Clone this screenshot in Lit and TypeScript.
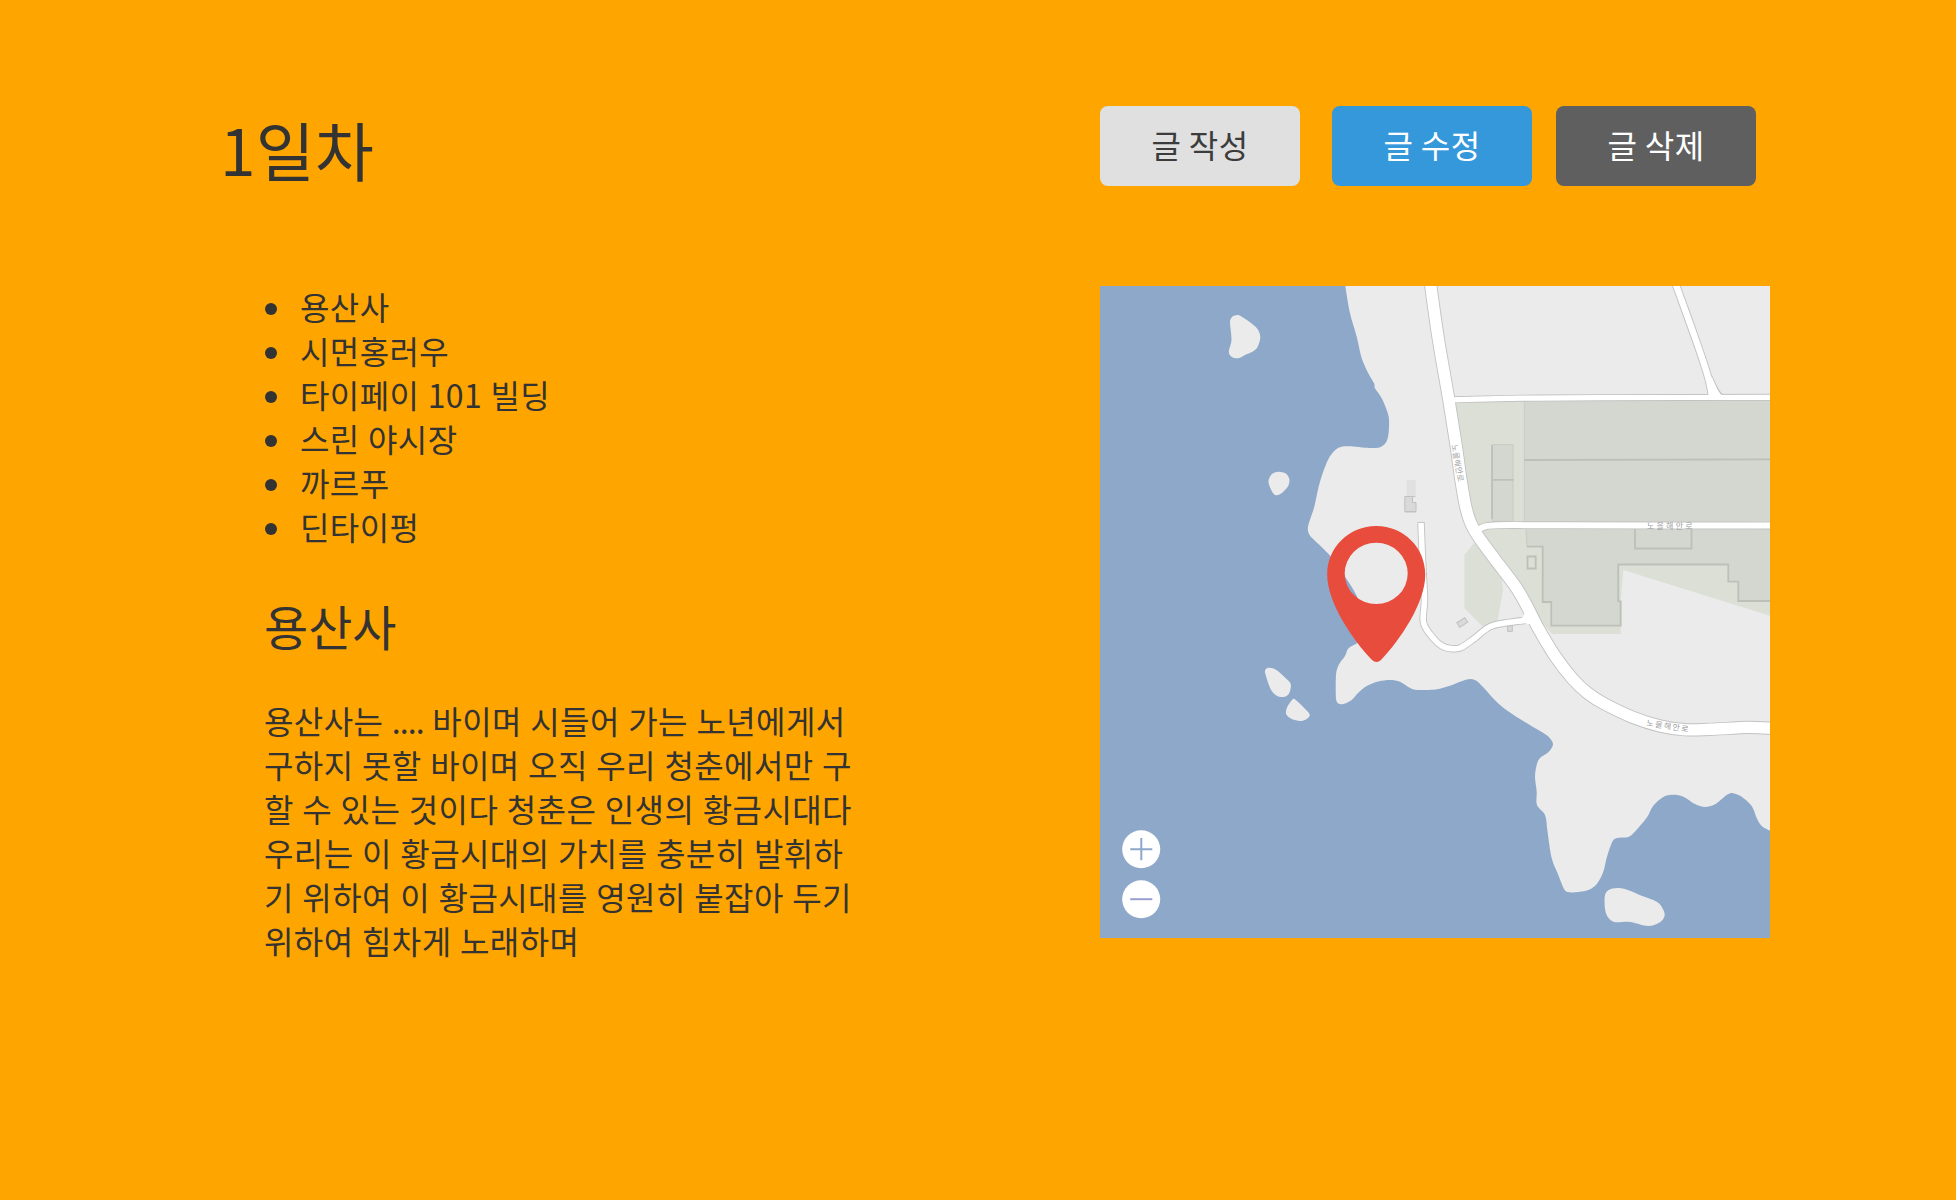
import { LitElement, html, svg, css } from "lit";
import { customElement } from "lit/decorators.js";

type Pt = [number, number];

/** Smooth path through all points (Catmull-Rom converted to cubic Béziers). */
function curve(pts: Pt[], closed = false): string {
  const n = pts.length;
  const at = (i: number): Pt =>
    closed ? pts[(i + n) % n] : pts[Math.max(0, Math.min(n - 1, i))];
  let d = `M${pts[0][0]} ${pts[0][1]}`;
  for (let i = 0; i < (closed ? n : n - 1); i++) {
    const [a, b, c, e] = [at(i - 1), at(i), at(i + 1), at(i + 2)];
    // Tangents are limited by the segment length so that short segments do not loop.
    const len = Math.hypot(c[0] - b[0], c[1] - b[1]);
    const tangent = (p: Pt, q: Pt): Pt => {
      const tx = (q[0] - p[0]) / 6;
      const ty = (q[1] - p[1]) / 6;
      const t = Math.hypot(tx, ty) || 1;
      const k = Math.min(1, (len * 0.36) / t);
      return [tx * k, ty * k];
    };
    const u = tangent(a, c);
    const v = tangent(b, e);
    const f = (x: number) => x.toFixed(1);
    d += `C${f(b[0] + u[0])} ${f(b[1] + u[1])} ${f(c[0] - v[0])} ${f(c[1] - v[1])} ${c[0]} ${c[1]}`;
  }
  return closed ? d + "Z" : d;
}

const coast: Pt[] = [
  [1345.3, 286], [1350, 313.3], [1356.7, 336.7], [1361.7, 358.3], [1368.3, 373.3],
  [1374.3, 383.8], [1374.8, 388], [1381.7, 398.3], [1388.3, 415], [1389, 426.7],
  [1387.7, 438.3], [1384.3, 444.5], [1378.3, 447.7], [1365, 447.7], [1353.3, 446.5],
  [1341.7, 446.7], [1335, 450.3], [1328.3, 459.3], [1322.7, 473.3], [1318.3, 488.3],
  [1314.3, 506.7], [1308, 526.7], [1309.3, 534.5], [1315, 540.7], [1330.3, 556],
  [1345, 576.7], [1356.7, 596], [1364, 618], [1364, 636], [1357.7, 642.7],
  [1348.5, 648.3], [1345, 656], [1338.6, 665], [1336, 675], [1336, 699],
  [1338.3, 703.5], [1343.3, 704], [1351.7, 700], [1358.3, 692.8], [1366.7, 686],
  [1378.3, 681.5], [1390, 680], [1400, 681.7], [1408.3, 687], [1415, 689.7],
  [1426, 690], [1436.7, 689.3], [1450, 685.7], [1466.7, 679.5], [1475, 680],
  [1483.3, 687.3], [1491.7, 696.7], [1503.3, 707.7], [1520, 719], [1540, 731],
  [1548.3, 736.5], [1553, 744.3], [1548.3, 752.3], [1540, 758], [1536.7, 765],
  [1535, 776.7], [1536.7, 791.7], [1537, 805], [1545, 815], [1547.3, 830],
  [1551.7, 858.3], [1558.3, 875], [1564, 889], [1567.5, 892], [1575, 892.3],
  [1588.3, 890], [1596.7, 884], [1603.3, 871.7], [1607, 856.7], [1612.7, 841],
  [1617, 838], [1628.3, 837], [1633.3, 833.3], [1646.7, 817.7], [1653.3, 805.7],
  [1663.3, 797], [1673.3, 794.8], [1683.3, 796.7], [1695, 804], [1705, 807],
  [1715, 804.3], [1726.7, 795], [1732, 793], [1741.7, 796.7], [1751.7, 806],
  [1756.7, 818], [1761.7, 826], [1770, 830.7],
];

const islands: Pt[][] = [
  [[1230, 321.7], [1232.3, 316.8], [1237.7, 315], [1243, 317.5], [1251.7, 323.5], [1257.7, 329.3], [1260.3, 337.3], [1257.7, 346.7], [1253.3, 351.3], [1245, 355], [1238.3, 358.3], [1231.7, 356.8], [1228.8, 351.7], [1231.5, 340]],
  [[1268.5, 482], [1271.7, 474.3], [1278.3, 471.7], [1285.7, 473.5], [1289.3, 479], [1288.3, 485.7], [1282.5, 492.5], [1276.7, 495.3], [1272.7, 492.7]],
  [[1265, 672.5], [1265.8, 669], [1269, 667.7], [1276.7, 670.2], [1285, 677.5], [1290.3, 683], [1290.6, 688.5], [1288.7, 694], [1284, 697], [1276.7, 695.7], [1270.7, 689.3]],
  [[1292, 700], [1293.8, 698.8], [1295.8, 700], [1299.5, 703.3], [1308.5, 712.5], [1309.7, 715], [1308.2, 717.8], [1305, 720], [1300, 721], [1291.7, 719], [1286.4, 714.5], [1286.2, 710], [1288.3, 705]],
  [[1604.7, 896.7], [1608.3, 890.3], [1618.3, 888], [1630, 890.7], [1643, 896.3], [1656.7, 901.7], [1661.5, 906.5], [1664.7, 915], [1660, 922.3], [1648.3, 926], [1630, 922], [1613.3, 921.7], [1606, 913.3]],
];

const roads: { w: number; pts: Pt[] }[] = [
  { w: 5.6, pts: [[1421, 523], [1422.5, 560], [1424.5, 600], [1423.6, 623], [1434, 639], [1442, 646], [1451, 648.6], [1460, 648], [1473.3, 639.3], [1490, 626.7], [1510, 622.3], [1528, 620]] },
  { w: 6.4, pts: [[1675.7, 284], [1692.3, 330], [1702.7, 360], [1708.8, 380], [1712, 396]] },
  { w: 5.2, pts: [[1450, 399.8], [1523, 398.2], [1600, 397.7], [1772, 397.3]] },
  { w: 6, pts: [[1477, 530], [1486, 526.2], [1497, 525.2], [1560, 525.2], [1772, 525.6]] },
  { w: 11.4, pts: [[1430.5, 284], [1438.5, 340], [1448.3, 396.7], [1456.3, 446.7], [1461, 480], [1465.7, 506.7], [1470.5, 522.5], [1478.3, 536.7], [1496.7, 561.7], [1516, 587.3], [1526, 604.5], [1538.3, 628.3], [1555, 656], [1572.7, 679], [1587.5, 693], [1603.3, 703.3], [1632.7, 717.3], [1660, 726], [1685, 729.7], [1710, 729.3], [1748.3, 727.4], [1772, 728.3]] },
];

@customElement("area-map")
export class AreaMap extends LitElement {
  static styles = css`
    :host { display: block; }
    svg { display: block; width: 670px; height: 652px; }
    .sea { fill: #8ea8c9; }
    .land { fill: #ebebeb; }
    .park { fill: #dcdfd6; }
    .block { fill: #d4d7cf; }
    .wall { fill: none; stroke: #bdc0b9; stroke-width: 1.8; }
    .faint { fill: none; stroke: #c8cbc4; stroke-width: 1; }
    .hut { fill: #d9d9d9; stroke: #c0c0c0; stroke-width: 1; }
    .shade { fill: #e0e0e0; }
    .edge { fill: none; stroke: #c2c2c2; }
    .road { fill: none; stroke: #fff; }
    .joint { fill: #fff; }
    .name { fill: #a0a0a0; font: 8px "Noto Sans CJK KR", sans-serif; }
    .pin { fill: #e84c3d; fill-rule: evenodd; }
    .knob { fill: #fff; }
    .sign { stroke: #8ea8c9; stroke-width: 2; }
    .minus { stroke: #9a9fd0; stroke-width: 2; }
  `;

  render() {
    const lines = roads.map((r) => ({ w: r.w, d: curve(r.pts) }));
    return html`<svg viewBox="1100 286 670 652" role="img">
      <rect class="sea" x="1100" y="286" width="670" height="652"></rect>
      <path class="land" d="${curve(coast)}V286Z"></path>
      ${islands.map((i) => svg`<path class="land" d=${curve(i, true)}></path>`)}
      <path class="park" d="M1452 402L1770 400V634H1552L1528 606L1478 532L1462 478Z"></path>
      <path class="park" d="M1474 543L1464.3 555V608L1482 626L1497 624L1503 590L1500 566Z"></path>
      <path class="land" d="M1623.3 570L1770 615.7V640H1620.7V602Z"></path>
      <path class="block" d="M1524.3 400H1770V522H1524.3ZM1526 528L1527 546.7H1542.7L1543.3 601.7H1551.3V625.7H1620.7V601.7H1618V564.3H1728.3V581.7H1738.3V600.8H1770V528Z"></path>
      <path class="faint" d="M1524.3 401V522M1526 529L1527 546.7M1618 601V564.5"></path>
      <path class="wall" d="M1524.3 460L1770 459.3M1527 546.7H1542.7V602H1551.3V625.7H1620.7V601.3H1618.3V564.5H1728.3V581.7H1738.3V601H1770"></path>
      <path class="wall" d="M1635 528V548.5H1691.5V528M1527.5 556.5H1535.7V568.5H1527.5Z"></path>
      <rect class="block" x="1492" y="444.7" width="21.3" height="76.5"></rect>
      <path class="faint" d="M1492 444.7H1513V521.3H1493L1492 519Z"></path>
      <path class="wall" d="M1492 479.8H1513.5M1492 445V519"></path>
      <rect class="shade" x="1406.7" y="480" width="9" height="16"></rect>
      <path class="hut" d="M1404.8 496.5H1412.5V502.5H1416V511.5H1404.8Z"></path>
      <path class="edge" stroke-width="1" d="M1412.5 496.5H1415.5M1404.8 512H1416"></path>
      <rect class="hut" x="1457.5" y="619.7" width="9.5" height="5.5" transform="rotate(-33 1462.3 622.5)"></rect>
      <rect class="hut" x="1507.7" y="625.7" width="4.6" height="5.6"></rect>
      ${lines.map((l) => svg`<path class="edge" stroke-width=${l.w + 1.8} d=${l.d}></path>`)}
      <path class="edge" stroke-width="1" d="M1417.5 522.4H1424.6"></path>
      <path class="edge" stroke-width="1.8" d="M1711.5 376C1715 384 1718 392 1722 394.6"></path>
      ${lines.map((l) => svg`<path class="road" stroke-width=${l.w} d=${l.d}></path>`)}
      <path class="joint" d="M1711.5 376C1715 384 1718 392 1722 395.5H1709.5ZM1518 619.3C1522 618.6 1524 616.5 1524.8 613L1532 622L1528 624.5C1526 623 1523 623 1519 623.8Z"></path>
      <text class="name" transform="translate(1451.5 445) rotate(80)" textLength="38">노을해안로</text>
      <text class="name" x="1647" y="528.5" textLength="46">노을해안로</text>
      <text class="name" transform="translate(1646 725.5) rotate(9)" textLength="43">노을해안로</text>
      <path class="pin" d="M1376.3 526C1349 526 1327.2 547.5 1327.2 574.5C1327.2 603 1353 640 1372 660Q1376.5 664.2 1381 660C1400 640 1425.3 603 1425.3 574.5C1425.3 547.5 1403.5 526 1376.3 526ZM1376.2 542.7A31.5 30.7 0 1 1 1376.2 604.1A31.5 30.7 0 1 1 1376.2 542.7Z"></path>
      <circle class="knob" cx="1141.2" cy="849.2" r="19"></circle>
      <path class="sign" d="M1130.2 849.2H1152.3M1141.3 838V860.3"></path>
      <circle class="knob" cx="1141.2" cy="899.2" r="19"></circle>
      <path class="minus" d="M1130.2 899.2H1152.3"></path>
    </svg>`;
  }
}

const places = ["용산사", "시먼홍러우", "타이페이 101 빌딩", "스린 야시장", "까르푸", "딘타이펑"];

const story = [
  "구하지 못할 바이며 오직 우리 청춘에서만 구",
  "할 수 있는 것이다 청춘은 인생의 황금시대다",
  "우리는 이 황금시대의 가치를 충분히 발휘하",
  "기 위하여 이 황금시대를 영원히 붙잡아 두기",
  "위하여 힘차게 노래하며",
];

@customElement("app-root")
export class AppRoot extends LitElement {
  static styles = css`
    :host {
      display: block;
      box-sizing: border-box;
      height: 1200px;
      background: #ffa500;
      color: #333;
      font: 32px/44px "Noto Sans CJK KR", sans-serif;
      letter-spacing: 0.4px;
      overflow: hidden;
    }
    .page {
      display: grid;
      grid-template-columns: 880px 670px;
      grid-template-rows: 180px auto;
      justify-content: start;
      padding: 106px 0 0 220px;
    }
    .title { margin: -4px 0 0; font-size: 64px; line-height: 92px; font-weight: 400; letter-spacing: 0.3px; }
    .actions { display: flex; height: 80px; }
    .btn {
      width: 200px;
      height: 80px;
      padding: 0 0 4px;
      border: 0;
      border-radius: 8px;
      font: inherit;
      letter-spacing: inherit;
    }
    .write { background: #e0e0e0; color: #3c3c3c; margin-right: 32px; }
    .edit { background: #3498db; color: #fff; margin-right: 24px; }
    .remove { background: #5f5f5f; color: #fff; }
    .entry { padding-left: 44px; margin-top: -2px; }
    .places { list-style: none; margin: 0; padding: 0; word-spacing: 0.7px; }
    .place { display: flex; align-items: center; gap: 23px; height: 44px; }
    .place::before { content: ""; width: 12px; height: 12px; margin: 5px 0 0 1px; border-radius: 50%; background: #333; }
    .subtitle { margin: 42px 0 0; font-size: 48px; line-height: 70px; font-weight: 400; letter-spacing: 0; }
    .story { margin: 38px 0 0; white-space: pre; word-spacing: 0.9px; }
    .line { display: block; }
    .dots { letter-spacing: -0.9px; }
  `;

  render() {
    return html`<main class="page">
      <h1 class="title">1일차</h1>
      <div class="actions">
        <button class="btn write">글 작성</button>
        <button class="btn edit">글 수정</button>
        <button class="btn remove">글 삭제</button>
      </div>
      <section class="entry">
        <ul class="places">${places.map((p) => html`<li class="place">${p}</li>`)}</ul>
        <h2 class="subtitle">용산사</h2>
        <p class="story"><span class="line">용산사는 <span class="dots">....</span> 바이며 시들어 가는 노년에게서</span>${story.map((s) => html`<span class="line">${s}</span>`)}</p>
      </section>
      <area-map></area-map>
    </main>`;
  }
}
